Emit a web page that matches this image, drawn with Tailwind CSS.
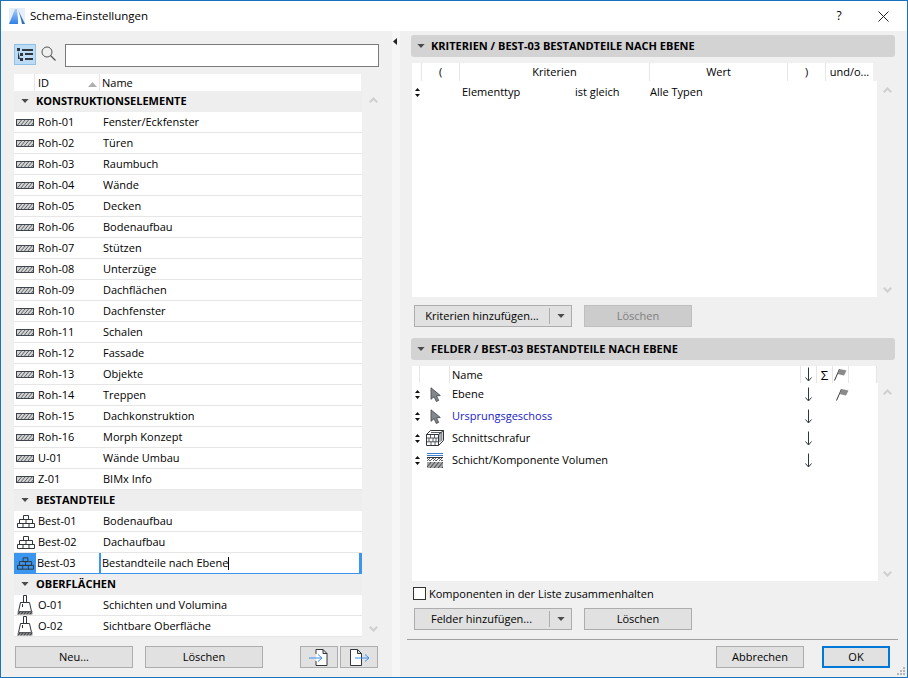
<!DOCTYPE html>
<html lang="de">
<head>
    <meta charset="UTF-8">
    <title>Schema-Einstellungen</title>
    <script src="https://cdn.jsdelivr.net/npm/@tailwindcss/browser@4"></script>
</head>
<body class="bg-[#f0f0f0]">
    <!-- Icons -->
    <svg width="0" height="0" class="absolute">
        <defs>
            <linearGradient id="logo-blue" x1="0" y1="0" x2="0" y2="1">
                <stop offset="0" stop-color="#a8cff6"/>
                <stop offset="1" stop-color="#2f80e8"/>
            </linearGradient>
        </defs>
        <symbol id="hatch" viewBox="0 0 18 7">
            <rect x="0.5" y="0.5" width="17" height="6" fill="#d4d4d4" stroke="#3c4248"/>
            <path d="M1 6.500 6 .5M4.500 6.500 9.500 .5M8 6.500 13 .5M11.500 6.500 16.500 .5M15 6.500 17.500 3.500" stroke="#5a5f64" fill="none"/>
        </symbol>
        <symbol id="bricks" viewBox="0 0 18 13">
            <path d="M6.500 .5h5v4h-5zM2.500 4.500h13v4h-13zM9 4.500v4M.5 8.500h17v4H.5zM6 8.500v4M12 8.500v4" fill="none" stroke="#30363c"/>
        </symbol>
        <symbol id="brush" viewBox="0 0 16 20">
            <path d="M6.500.5h3v7h-3z" fill="#fff" stroke="#30363c"/>
            <path d="M3.500 7.500h9l2 9H1.500z" fill="#fff" stroke="#30363c"/>
            <path d="M.5 16.500h15v3H.5z" fill="#8a8a8a"/>
            <path d="M1 19.500l2-3M4 19.500l2-3M7 19.500l2-3M10 19.500l2-3M13 19.500l2-3" stroke="#30363c" fill="none"/>
            <path d="M5.500 9v3" stroke="#30363c"/>
        </symbol>
        <symbol id="cursor" viewBox="0 0 11 15">
            <path d="M1 .8v11.500l3-2.600 2.300 4.800 2.400-1.100-2.200-4.500 3.800-.4z" fill="#84888c" stroke="#3c4248" stroke-width=".8"/>
        </symbol>
        <symbol id="box" viewBox="0 0 18 16">
            <path d="M.5 4.500h12v11H.5zM.5 4.500 4.500.5h13l-5 4M12.500 15.500l5-5V.5" fill="#fff" stroke="#30363c"/>
            <path d="M.5 8h12M.5 11.800h12M4.500 4.500V8M8.500 4.500V8M3 8v3.800M7 8v3.800M10 8v3.800M5 11.800v3.700M9 11.800v3.700M14 3v9M15.800 2v9M5 2.500h10" fill="none" stroke="#30363c" stroke-width=".8"/>
        </symbol>
        <symbol id="layers" viewBox="0 0 16 15">
            <path d="M0 .5h16M0 2.500h16" stroke="#3f7fd0" fill="none"/>
            <path d="M0 4.500h16" stroke="#30363c" fill="none"/>
            <path d="M0 5l3 3 3-3 3 3 3-3 3 3 1-1M0 8l3-3M6 8l3-3M12 8l3-3M3 8l3-3M9 8l3-3" stroke="#50565c" fill="none" stroke-width=".9"/>
            <path d="M0 9h16v6H0z" fill="#a8a8a8"/>
            <path d="M0 14l4-5M3 15l5-6M7 15l5-6M11 15l5-6M15 15l1-1.500" stroke="#30363c" fill="none" stroke-width=".9"/>
        </symbol>
        <symbol id="reorder" viewBox="0 0 5 9">
            <path d="M2.500 0 5 3H0zM0 6h5L2.500 9z" fill="#111"/>
        </symbol>
        <symbol id="down" viewBox="0 0 9 15">
            <path d="M4.500 .5v13M1.500 10.500l3 3.500 3-3.500" fill="none" stroke="#30363c"/>
        </symbol>
        <symbol id="flag" viewBox="0 0 13 13">
            <path d="M.5 12.500 5.500 1" fill="none" stroke="#30363c"/>
            <path d="M5.500 1l7 1.500-2.500 5-6.500-1.500z" fill="#8a8a8a"/>
        </symbol>
        <symbol id="tri" viewBox="0 0 9 5">
            <path d="M0 0h9L4.500 5z" fill="#4a4a4a"/>
        </symbol>
        <symbol id="up-chev" viewBox="0 0 9 6">
            <path d="M.8 5.300 4.500 1.500l3.700 3.800" fill="none" stroke="#cfcfcf" stroke-width="2"/>
        </symbol>
        <symbol id="down-chev" viewBox="0 0 9 6">
            <path d="M.8.700 4.500 4.500 8.200.7" fill="none" stroke="#cfcfcf" stroke-width="2"/>
        </symbol>
    </svg>

    <div class="relative w-[908px] h-[678px] flex flex-col overflow-hidden border border-[#1a74bd] text-[11px] leading-[10px] text-black font-['Open_Sans',sans-serif]">
        <!-- Titelleiste -->
        <div class="h-[30px] shrink-0 bg-white flex items-center">
            <svg class="w-[16px] h-[16px] ml-[8px] mr-[5px]" viewBox="0 0 16 16">
                <path d="M0 0h16v16H0z" fill="#e6eff9"/>
                <path d="M0 16 6 1h2c1 5 1 10 1 15z" fill="url(#logo-blue)"/>
                <path d="M8 1c2 4 4 10 5 15H9c0-5 0-10-1-15z" fill="#fff"/>
                <path d="M8 0l8 16h-3C12 10 10 4 8 0z" fill="#2f6fc0"/>
            </svg>
            <span class="text-[11.5px] leading-[12px]">Schema-Einstellungen</span>
            <span class="ml-auto w-[30px] text-center text-[12px] leading-[12px]">?</span>
            <svg class="w-[11px] h-[11px] ml-[24px] mr-[18px]" viewBox="0 0 11 11"><path d="M.5.5l10 10M10.500.5l-10 10" stroke="#222" fill="none"/></svg>
        </div>

        <div class="flex flex-1 min-h-0">
            <!-- Linke Spalte -->
            <div class="w-[385px] shrink-0 pl-[13px] pt-[13px] flex flex-col">
                <div class="flex h-[23px] items-start">
                    <div class="w-[22px] h-[21px] bg-[#bcdcf5] border border-[#8fc0e8] flex items-center justify-center">
                        <svg class="w-[16px] h-[13px]" viewBox="0 0 16 13"><path d="M0 0h3v3H0zM5 1h11v2H5zM3 5h3v3H3zM8 5h8v2H8zM3 10h3v3H3zM8 10h8v2H8zM1 3v8h2M1 6h2" fill="#30363c"/></svg>
                    </div>
                    <svg class="w-[15px] h-[15px] mt-[2px] ml-[5px]" viewBox="0 0 15 15"><circle cx="6" cy="6" r="5" fill="none" stroke="#555"/><path d="M9.500 9.500l5 5" stroke="#555" stroke-width="1.300"/></svg>
                    <div class="ml-[9px] w-[314px] h-[23px] bg-white border border-[#7a7a7a]"></div>
                </div>

                <div class="mt-[7px] w-[347px] h-[17px] bg-white flex items-center">
                    <div class="w-[21px] h-full border-r border-[#e6e6e6]"></div>
                    <div class="w-[65px] h-full border-r border-[#e6e6e6] flex items-center pl-[3px]">
                        <span>ID</span>
                        <svg class="w-[9px] h-[5px] ml-auto mr-[2px] mt-[3px]" viewBox="0 0 9 5"><path d="M4.500 0 9 5H0z" fill="#b0b0b0"/></svg>
                    </div>
                    <span class="pl-[2px]">Name</span>
                </div>

                <div class="flex">
                    <div class="w-[348px] flex flex-col">
                        <div class="h-[21px] pb-px bg-[#eeeeee] flex items-center font-bold"><svg class="w-[8px] h-[4px] ml-[7px] mr-[7px]"><use href="#tri"/></svg>KONSTRUKTIONSELEMENTE</div>
                        <div class="h-[21px] bg-white border-b border-[#e6e6e6] flex items-center"><svg class="w-[18px] h-[7px] ml-[2px] mr-[4px]"><use href="#hatch"/></svg><span class="w-[65px]">Roh-01</span>Fenster/Eckfenster</div>
                        <div class="h-[21px] bg-white border-b border-[#e6e6e6] flex items-center"><svg class="w-[18px] h-[7px] ml-[2px] mr-[4px]"><use href="#hatch"/></svg><span class="w-[65px]">Roh-02</span>Türen</div>
                        <div class="h-[21px] bg-white border-b border-[#e6e6e6] flex items-center"><svg class="w-[18px] h-[7px] ml-[2px] mr-[4px]"><use href="#hatch"/></svg><span class="w-[65px]">Roh-03</span>Raumbuch</div>
                        <div class="h-[21px] bg-white border-b border-[#e6e6e6] flex items-center"><svg class="w-[18px] h-[7px] ml-[2px] mr-[4px]"><use href="#hatch"/></svg><span class="w-[65px]">Roh-04</span>Wände</div>
                        <div class="h-[21px] bg-white border-b border-[#e6e6e6] flex items-center"><svg class="w-[18px] h-[7px] ml-[2px] mr-[4px]"><use href="#hatch"/></svg><span class="w-[65px]">Roh-05</span>Decken</div>
                        <div class="h-[21px] bg-white border-b border-[#e6e6e6] flex items-center"><svg class="w-[18px] h-[7px] ml-[2px] mr-[4px]"><use href="#hatch"/></svg><span class="w-[65px]">Roh-06</span>Bodenaufbau</div>
                        <div class="h-[21px] bg-white border-b border-[#e6e6e6] flex items-center"><svg class="w-[18px] h-[7px] ml-[2px] mr-[4px]"><use href="#hatch"/></svg><span class="w-[65px]">Roh-07</span>Stützen</div>
                        <div class="h-[21px] bg-white border-b border-[#e6e6e6] flex items-center"><svg class="w-[18px] h-[7px] ml-[2px] mr-[4px]"><use href="#hatch"/></svg><span class="w-[65px]">Roh-08</span>Unterzüge</div>
                        <div class="h-[21px] bg-white border-b border-[#e6e6e6] flex items-center"><svg class="w-[18px] h-[7px] ml-[2px] mr-[4px]"><use href="#hatch"/></svg><span class="w-[65px]">Roh-09</span>Dachflächen</div>
                        <div class="h-[21px] bg-white border-b border-[#e6e6e6] flex items-center"><svg class="w-[18px] h-[7px] ml-[2px] mr-[4px]"><use href="#hatch"/></svg><span class="w-[65px]">Roh-10</span>Dachfenster</div>
                        <div class="h-[21px] bg-white border-b border-[#e6e6e6] flex items-center"><svg class="w-[18px] h-[7px] ml-[2px] mr-[4px]"><use href="#hatch"/></svg><span class="w-[65px]">Roh-11</span>Schalen</div>
                        <div class="h-[21px] bg-white border-b border-[#e6e6e6] flex items-center"><svg class="w-[18px] h-[7px] ml-[2px] mr-[4px]"><use href="#hatch"/></svg><span class="w-[65px]">Roh-12</span>Fassade</div>
                        <div class="h-[21px] bg-white border-b border-[#e6e6e6] flex items-center"><svg class="w-[18px] h-[7px] ml-[2px] mr-[4px]"><use href="#hatch"/></svg><span class="w-[65px]">Roh-13</span>Objekte</div>
                        <div class="h-[21px] bg-white border-b border-[#e6e6e6] flex items-center"><svg class="w-[18px] h-[7px] ml-[2px] mr-[4px]"><use href="#hatch"/></svg><span class="w-[65px]">Roh-14</span>Treppen</div>
                        <div class="h-[21px] bg-white border-b border-[#e6e6e6] flex items-center"><svg class="w-[18px] h-[7px] ml-[2px] mr-[4px]"><use href="#hatch"/></svg><span class="w-[65px]">Roh-15</span>Dachkonstruktion</div>
                        <div class="h-[21px] bg-white border-b border-[#e6e6e6] flex items-center"><svg class="w-[18px] h-[7px] ml-[2px] mr-[4px]"><use href="#hatch"/></svg><span class="w-[65px]">Roh-16</span>Morph Konzept</div>
                        <div class="h-[21px] bg-white border-b border-[#e6e6e6] flex items-center"><svg class="w-[18px] h-[7px] ml-[2px] mr-[4px]"><use href="#hatch"/></svg><span class="w-[65px]">U-01</span>Wände Umbau</div>
                        <div class="h-[21px] bg-white border-b border-[#e6e6e6] flex items-center"><svg class="w-[18px] h-[7px] ml-[2px] mr-[4px]"><use href="#hatch"/></svg><span class="w-[65px]">Z-01</span>BIMx Info</div>
                        <div class="h-[21px] pb-px bg-[#eeeeee] flex items-center font-bold"><svg class="w-[8px] h-[4px] ml-[7px] mr-[7px]"><use href="#tri"/></svg>BESTANDTEILE</div>
                        <div class="h-[21px] bg-white border-b border-[#e6e6e6] flex items-center"><svg class="w-[18px] h-[13px] ml-[3px] mr-[3px]"><use href="#bricks"/></svg><span class="w-[65px]">Best-01</span>Bodenaufbau</div>
                        <div class="h-[21px] bg-white border-b border-[#e6e6e6] flex items-center"><svg class="w-[18px] h-[13px] ml-[3px] mr-[3px]"><use href="#bricks"/></svg><span class="w-[65px]">Best-02</span>Dachaufbau</div>
                        <!-- Zeile in Bearbeitung -->
                        <div class="h-[21px] bg-white border-b border-[#3b96f0] flex items-center">
                            <div class="w-[22px] h-full bg-[#3b96f0] flex items-center justify-center"><svg class="w-[17px] h-[13px]"><use href="#bricks"/></svg></div>
                            <span class="w-[63px] pl-[1px]">Best-03</span>
                            <div class="flex-1 h-full flex items-center border-l-2 border-r-[3px] border-[#3b96f0] pl-[1px]">Bestandteile nach Ebene<span class="w-px h-[13px] bg-black"></span></div>
                        </div>
                        <div class="h-[21px] pb-px bg-[#eeeeee] flex items-center font-bold"><svg class="w-[8px] h-[4px] ml-[7px] mr-[7px]"><use href="#tri"/></svg>OBERFLÄCHEN</div>
                        <div class="h-[21px] bg-white border-b border-[#e6e6e6] flex items-center"><svg class="w-[16px] h-[20px] ml-[3px] mr-[5px]"><use href="#brush"/></svg><span class="w-[65px]">O-01</span>Schichten und Volumina</div>
                        <div class="h-[21px] bg-white border-b border-[#e6e6e6] flex items-center"><svg class="w-[16px] h-[20px] ml-[3px] mr-[5px]"><use href="#brush"/></svg><span class="w-[65px]">O-02</span>Sichtbare Oberfläche</div>
                    </div>
                    <div class="flex-1 flex flex-col justify-between items-center pt-[6px] pb-[5px] pr-[2px]">
                        <svg class="w-[9px] h-[6px]"><use href="#up-chev"/></svg>
                        <svg class="w-[9px] h-[6px]"><use href="#down-chev"/></svg>
                    </div>
                </div>

                <div class="mt-[9px] h-[22px] flex pl-[1px]">
                    <div class="w-[118px] bg-[#e1e1e1] border border-[#adadad] flex items-center justify-center">Neu...</div>
                    <div class="ml-[12px] w-[118px] bg-[#e1e1e1] border border-[#adadad] flex items-center justify-center">Löschen</div>
                    <div class="ml-[37px] w-[38px] bg-[#e1e1e1] border border-[#adadad] flex items-center justify-center">
                        <svg class="w-[20px] h-[17px]" viewBox="0 0 20 17"><path d="M7 5V.5h7l4 4v12H7v-4.500M14 .5v4h4" fill="#fff" stroke="#30363c"/><path d="M0 9h13M9 5.500 13 9l-4 3.500" fill="none" stroke="#3b8ff0"/></svg>
                    </div>
                    <div class="ml-[2px] w-[38px] bg-[#e1e1e1] border border-[#adadad] flex items-center justify-center">
                        <svg class="w-[20px] h-[17px] ml-[2px]" viewBox="0 0 20 17"><path d="M.5.5h7l4 4v12H.5zM7.500.5v4h4" fill="#fff" stroke="#30363c"/><path d="M5 9h14M15 5.500 19 9l-4 3.500" fill="none" stroke="#3b8ff0"/></svg>
                    </div>
                </div>
            </div>

            <!-- Trenner -->
            <div class="w-[21px] shrink-0 pl-[6px]">
                <div class="w-[8px] h-full bg-[#f6f6f6] pt-[7px] pl-[1px]">
                    <svg class="w-[4px] h-[7px]" viewBox="0 0 4 7"><path d="M4 0v7L0 3.500z" fill="#222"/></svg>
                </div>
            </div>

            <!-- Rechte Spalte -->
            <div class="flex-1 pt-[4px] flex flex-col">
                <div class="ml-[4px] mr-[12px] h-[22px] shrink-0 bg-[#d3d3d3] rounded-[3px] flex items-center font-bold"><svg class="w-[8px] h-[4px] ml-[6px] mr-[6px]"><use href="#tri"/></svg>KRITERIEN / BEST-03 BESTANDTEILE NACH EBENE</div>

                <div class="ml-[5px] mt-[6px] w-[461px] h-[18px] shrink-0 bg-white flex items-center">
                    <div class="w-[10px] h-full border-r border-[#e6e6e6]"></div>
                    <div class="w-[38px] h-full border-r border-[#e6e6e6] flex items-center justify-center">(</div>
                    <div class="w-[190px] h-full border-r border-[#e6e6e6] flex items-center justify-center">Kriterien</div>
                    <div class="w-[138px] h-full border-r border-[#e6e6e6] flex items-center justify-center">Wert</div>
                    <div class="w-[38px] h-full border-r border-[#e6e6e6] flex items-center justify-center">)</div>
                    <div class="w-[47px] h-full flex items-center justify-center">und/o...</div>
                </div>
                <div class="flex h-[216px] shrink-0">
                    <div class="ml-[5px] w-[465px] bg-white">
                        <div class="h-[22px] flex items-center">
                            <svg class="w-[5px] h-[9px] ml-[3px]"><use href="#reorder"/></svg>
                            <span class="ml-[42px] w-[113px]">Elementtyp</span>
                            <span class="w-[75px]">ist gleich</span>
                            <span>Alle Typen</span>
                        </div>
                    </div>
                    <div class="flex-1 flex flex-col justify-between items-center pt-[6px] pb-[4px] pr-[10px]">
                        <svg class="w-[9px] h-[6px]"><use href="#up-chev"/></svg>
                        <svg class="w-[9px] h-[6px]"><use href="#down-chev"/></svg>
                    </div>
                </div>

                <div class="mt-[8px] h-[22px] shrink-0 flex ml-[7px]">
                    <div class="w-[158px] bg-[#e1e1e1] border border-[#adadad] flex items-center">
                        <span class="w-[134px] text-center">Kriterien hinzufügen...</span>
                        <span class="w-px h-[16px] bg-[#adadad]"></span>
                        <svg class="w-[8px] h-[4px] ml-[7px]"><use href="#tri"/></svg>
                    </div>
                    <div class="ml-[12px] w-[108px] bg-[#cccccc] border border-[#bfbfbf] text-[#7f7f7f] flex items-center justify-center">Löschen</div>
                </div>

                <div class="ml-[4px] mr-[12px] mt-[11px] h-[22px] shrink-0 bg-[#d3d3d3] rounded-[3px] flex items-center font-bold"><svg class="w-[8px] h-[4px] ml-[6px] mr-[6px]"><use href="#tri"/></svg>FELDER / BEST-03 BESTANDTEILE NACH EBENE</div>

                <div class="ml-[5px] mt-[6px] w-[465px] h-[17px] shrink-0 bg-white flex items-center">
                    <div class="w-[8px] h-full border-r border-[#e6e6e6]"></div>
                    <div class="w-[30px] h-full border-r border-[#e6e6e6]"></div>
                    <div class="w-[351px] h-full border-r border-[#e6e6e6] flex items-center pl-[2px]">Name</div>
                    <div class="w-[16px] h-full border-r border-[#e6e6e6] flex items-center justify-center"><svg class="w-[9px] h-[15px]"><use href="#down"/></svg></div>
                    <div class="w-[16px] h-full border-r border-[#e6e6e6] flex items-center justify-center text-[13px]">Σ</div>
                    <div class="w-[16px] h-full border-r border-[#e6e6e6] flex items-center justify-center"><svg class="w-[13px] h-[13px]"><use href="#flag"/></svg></div>
                    <div class="flex-1 h-full border-r border-[#e6e6e6]"></div>
                </div>
                <div class="flex h-[198px] shrink-0">
                    <div class="ml-[5px] w-[466px] bg-white">
                        <div class="h-[22px] flex items-center">
                            <svg class="w-[5px] h-[9px] ml-[3px]"><use href="#reorder"/></svg>
                            <div class="w-[29px] flex justify-center pl-[2px]"><svg class="w-[11px] h-[15px]"><use href="#cursor"/></svg></div>
                            <span class="w-[355px] pl-[3px]">Ebene</span>
                            <svg class="w-[9px] h-[15px]"><use href="#down"/></svg>
                            <svg class="w-[13px] h-[13px] ml-[23px]"><use href="#flag"/></svg>
                        </div>
                        <div class="h-[22px] flex items-center">
                            <svg class="w-[5px] h-[9px] ml-[3px]"><use href="#reorder"/></svg>
                            <div class="w-[29px] flex justify-center pl-[2px]"><svg class="w-[11px] h-[15px]"><use href="#cursor"/></svg></div>
                            <span class="w-[355px] pl-[3px] text-[#2020c8]">Ursprungsgeschoss</span>
                            <svg class="w-[9px] h-[15px]"><use href="#down"/></svg>
                        </div>
                        <div class="h-[22px] flex items-center">
                            <svg class="w-[5px] h-[9px] ml-[3px]"><use href="#reorder"/></svg>
                            <div class="w-[29px] flex justify-center"><svg class="w-[18px] h-[16px]"><use href="#box"/></svg></div>
                            <span class="w-[355px] pl-[3px]">Schnittschrafur</span>
                            <svg class="w-[9px] h-[15px]"><use href="#down"/></svg>
                        </div>
                        <div class="h-[22px] flex items-center">
                            <svg class="w-[5px] h-[9px] ml-[3px]"><use href="#reorder"/></svg>
                            <div class="w-[29px] flex justify-center"><svg class="w-[16px] h-[15px]"><use href="#layers"/></svg></div>
                            <span class="w-[355px] pl-[3px]">Schicht/Komponente Volumen</span>
                            <svg class="w-[9px] h-[15px]"><use href="#down"/></svg>
                        </div>
                    </div>
                    <div class="flex-1 flex flex-col justify-between items-center pt-[6px] pb-[4px] pr-[10px]">
                        <svg class="w-[9px] h-[6px]"><use href="#up-chev"/></svg>
                        <svg class="w-[9px] h-[6px]"><use href="#down-chev"/></svg>
                    </div>
                </div>

                <div class="mt-[6px] h-[13px] shrink-0 ml-[6px] flex items-center">
                    <span class="w-[13px] h-[13px] bg-white border border-[#333]"></span>
                    <span class="ml-[3px]">Komponenten in der Liste zusammenhalten</span>
                </div>

                <div class="mt-[8px] h-[22px] shrink-0 flex ml-[7px]">
                    <div class="w-[158px] bg-[#e1e1e1] border border-[#adadad] flex items-center">
                        <span class="w-[133px] mr-px text-center">Felder hinzufügen...</span>
                        <span class="w-px h-[16px] bg-[#adadad]"></span>
                        <svg class="w-[8px] h-[4px] ml-[7px]"><use href="#tri"/></svg>
                    </div>
                    <div class="ml-[12px] w-[108px] bg-[#e1e1e1] border border-[#adadad] flex items-center justify-center">Löschen</div>
                </div>

                <div class="mt-[9px] h-px shrink-0 bg-[#a0a0a0] mr-[9px]"></div>

                <div class="mt-[6px] h-[22px] shrink-0 flex justify-end mr-[17px]">
                    <div class="w-[88px] bg-[#e1e1e1] border border-[#adadad] flex items-center justify-center">Abbrechen</div>
                    <div class="ml-[18px] w-[68px] bg-[#e1e1e1] border-2 border-[#0078d7] flex items-center justify-center">OK</div>
                </div>
            </div>
        </div>

        <!-- Griff zum Vergrößern -->
        <svg class="absolute right-[2px] bottom-[2px] w-[8px] h-[8px]" viewBox="0 0 8 8"><path d="M6 0h2v2H6zM3 3h2v2H3zM6 3h2v2H6zM0 6h2v2H0zM3 6h2v2H3zM6 6h2v2H6z" fill="#b5b5b5"/></svg>
    </div>
</body>
</html>
